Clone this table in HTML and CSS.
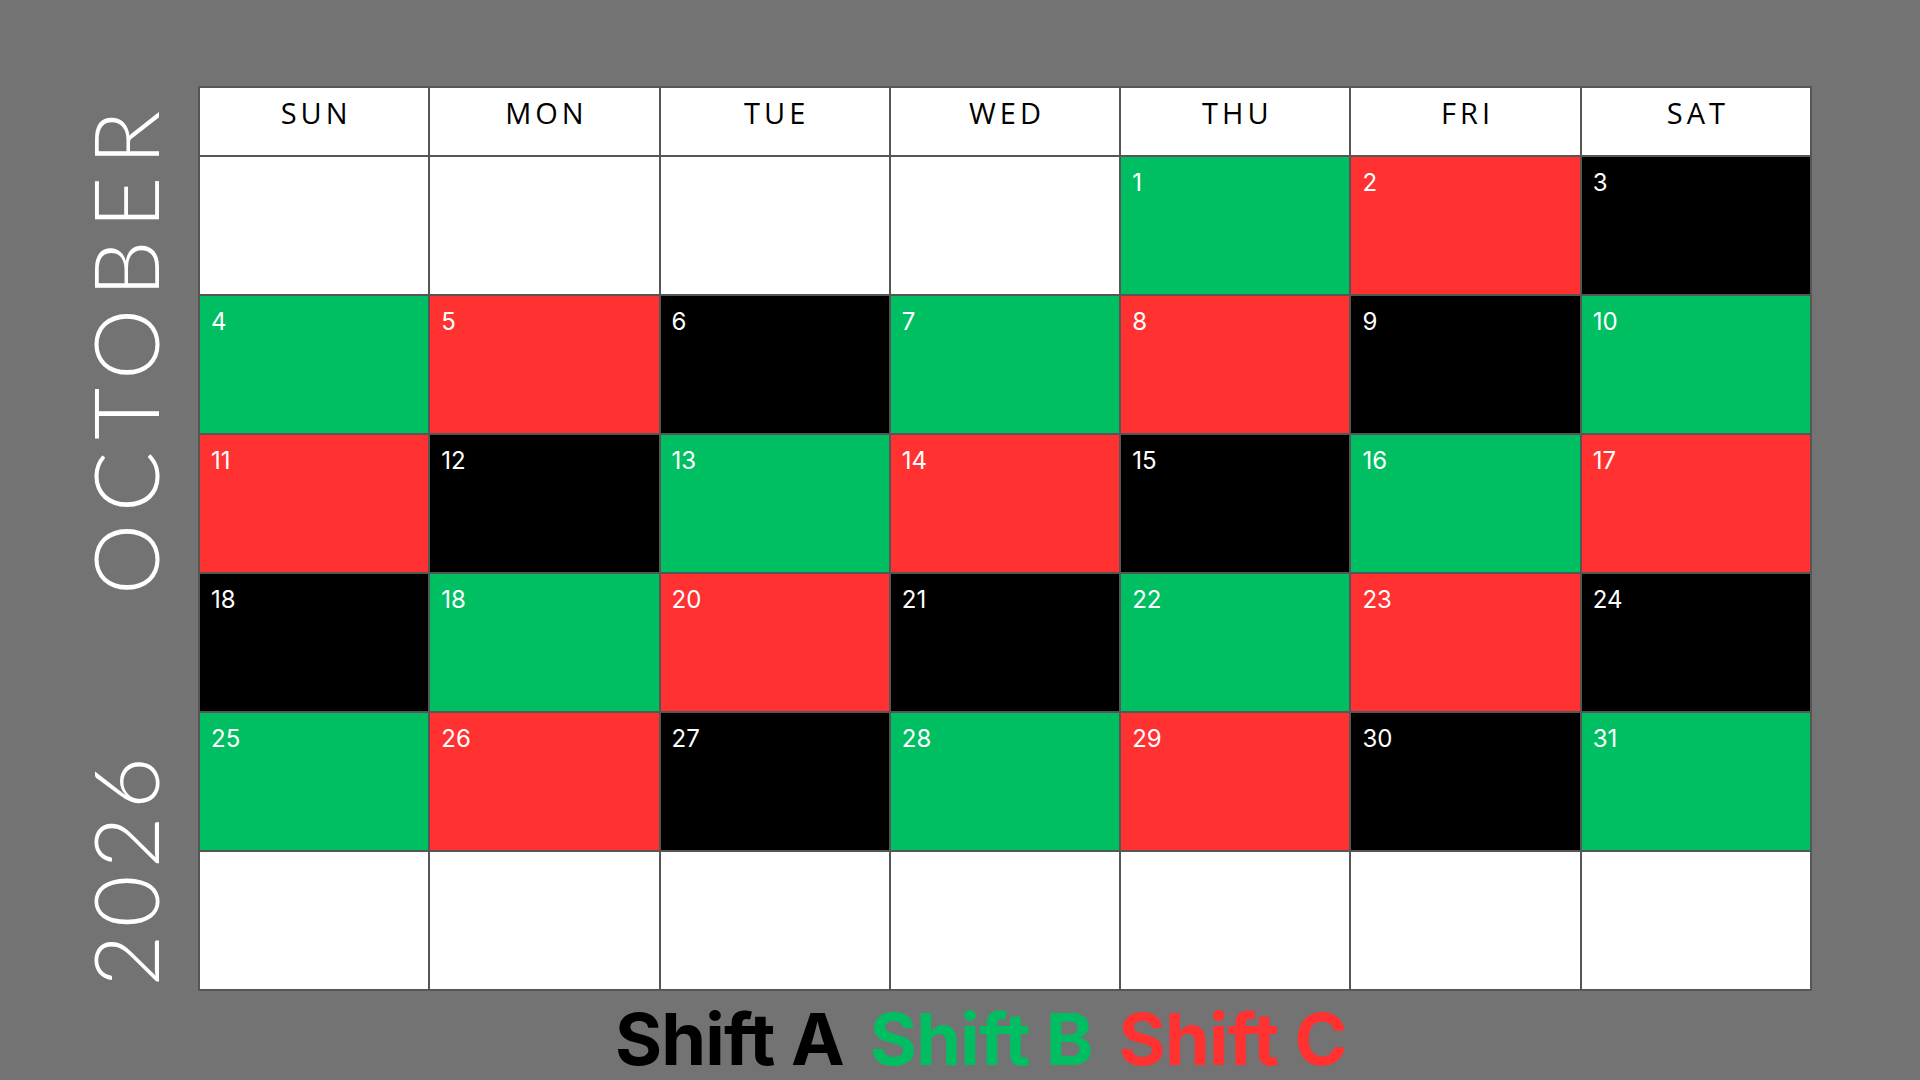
FILE: index.html
```html
<!DOCTYPE html>
<html lang="en">
<head>
<meta charset="utf-8">
<title>October 2026</title>
<link rel="stylesheet" href="styles.css">
</head>
<body>
<div class="page">
  <aside class="side">
    <div class="vtext month">OCTOBER</div>
    <div class="vtext year">2026</div>
  </aside>
  <main class="main">
    <div class="cal">
      <div class="hd">SUN</div><div class="hd">MON</div><div class="hd">TUE</div><div class="hd">WED</div><div class="hd">THU</div><div class="hd">FRI</div><div class="hd">SAT</div>

      <div class="day"></div><div class="day"></div><div class="day"></div><div class="day"></div>
      <div class="day g">1</div><div class="day r">2</div><div class="day k">3</div>

      <div class="day g">4</div><div class="day r">5</div><div class="day k">6</div><div class="day g">7</div><div class="day r">8</div><div class="day k">9</div><div class="day g">10</div>

      <div class="day r">11</div><div class="day k">12</div><div class="day g">13</div><div class="day r">14</div><div class="day k">15</div><div class="day g">16</div><div class="day r">17</div>

      <div class="day k">18</div><div class="day g">18</div><div class="day r">20</div><div class="day k">21</div><div class="day g">22</div><div class="day r">23</div><div class="day k">24</div>

      <div class="day g">25</div><div class="day r">26</div><div class="day k">27</div><div class="day g">28</div><div class="day r">29</div><div class="day k">30</div><div class="day g">31</div>

      <div class="day"></div><div class="day"></div><div class="day"></div><div class="day"></div><div class="day"></div><div class="day"></div><div class="day"></div>
    </div>
    <div class="legend">
      <span class="lg-a">Shift A</span>
      <span class="lg-b">Shift B</span>
      <span class="lg-c">Shift C</span>
    </div>
  </main>
</div>
</body>
</html>
```
FILE: styles.css
```css
* { box-sizing: border-box; }
html, body {
  margin: 0;
  padding: 0;
  width: 1920px;
  height: 1080px;
  overflow: hidden;
  background: #737373;
  font-family: Inter, "Open Sans", sans-serif;
}
.page {
  display: flex;
  padding-top: 86px;
}
.side {
  width: 198px;
  height: 905px;
  display: flex;
  flex-direction: column;
  justify-content: space-between;
  align-items: center;
  padding: 13px 0 4px 50px;
}
.vtext {
  writing-mode: vertical-rl;
  transform: rotate(180deg);
  color: #ffffff;
  font-family: Lato, "Open Sans", sans-serif;
  font-weight: 300;
  font-size: 90px;
  line-height: 1;
  letter-spacing: 11.5px;
}
.vtext.year {
  letter-spacing: 7px;
}
.main {
  width: 1614px;
}
.cal {
  display: grid;
  grid-template-columns: repeat(7, 1fr);
  grid-template-rows: 67px repeat(6, 137px);
  gap: 2px;
  padding: 2px;
  background: #565656;
}
.hd {
  background: #ffffff;
  color: #000000;
  text-align: center;
  font-family: "Open Sans", sans-serif;
  font-size: 29px;
  letter-spacing: 4px;
  padding-top: 5px;
  padding-left: 4px;
}
.day {
  background: #ffffff;
  color: #ffffff;
  font-size: 24px;
  line-height: 1.21;
  padding: 11px 0 0 11px;
}
.day.g { background: #00bf63; }
.day.r { background: #ff3131; }
.day.k { background: #000000; }
.legend {
  display: flex;
  justify-content: center;
  gap: 26px;
  margin-top: 12px;
  margin-right: 48px;
  font-size: 72px;
  font-weight: 700;
  line-height: 1;
  letter-spacing: -0.8px;
}
.lg-a { color: #000000; }
.lg-b { color: #00bf63; }
.lg-c { color: #ff3131; }
```
